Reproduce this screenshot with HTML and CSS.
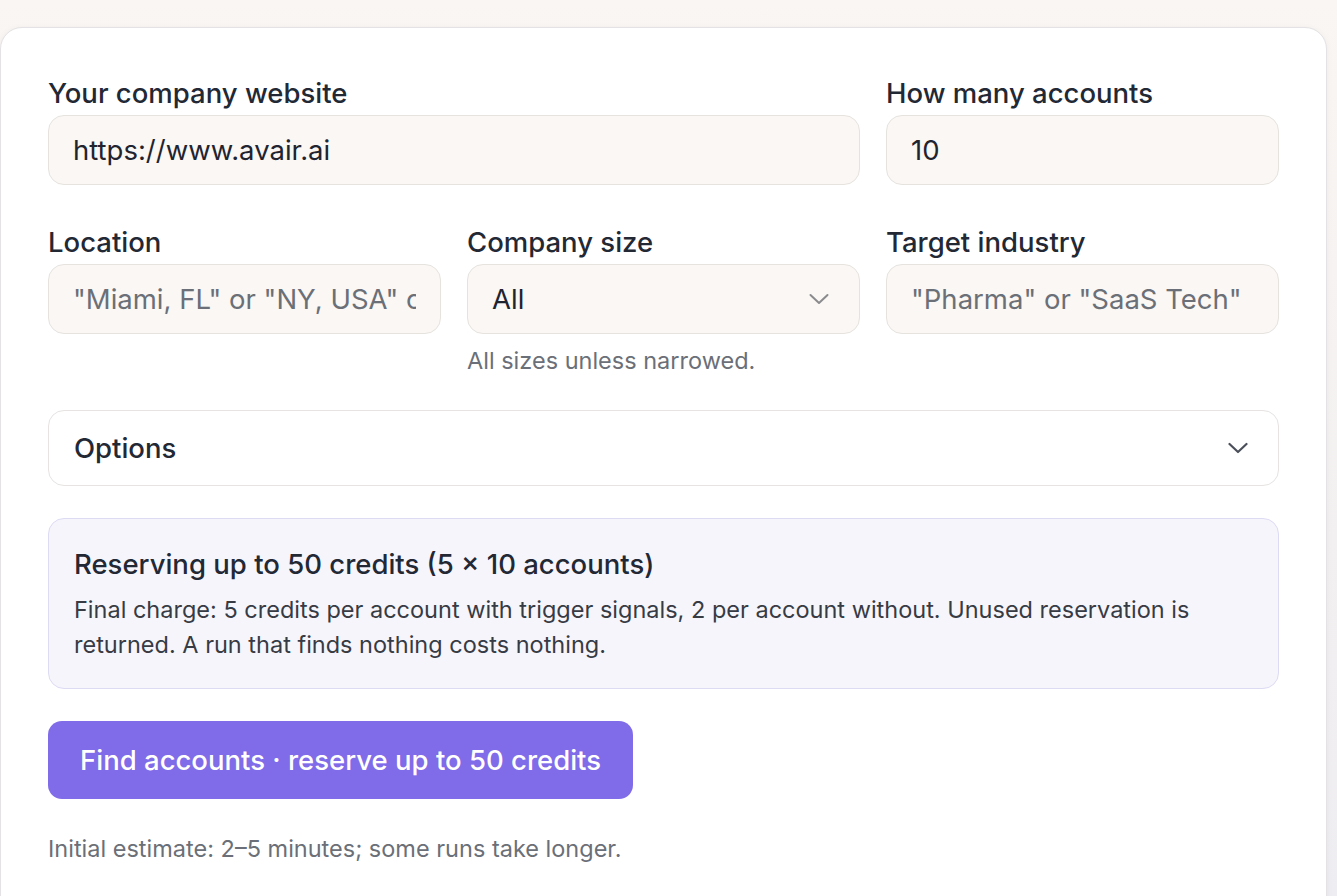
FILE: index.html
```html
<!DOCTYPE html>
<html lang="en">
<head>
<meta charset="utf-8">
<title>Find accounts</title>
<link rel="stylesheet" href="styles.css">
</head>
<body>
<div class="page">
  <div class="card">
    <div class="grid">
      <div class="field span2">
        <label class="label">Your company website</label>
        <input class="input" type="text" value="https://www.avair.ai">
      </div>
      <div class="field">
        <label class="label">How many accounts</label>
        <input class="input" type="text" value="10">
      </div>
      <div class="field">
        <label class="label">Location</label>
        <input class="input" type="text" placeholder="&quot;Miami, FL&quot; or &quot;NY, USA&quot; or &quot;Europe&quot;">
      </div>
      <div class="field">
        <label class="label">Company size</label>
        <div class="input select">
          <span>All</span>
          <svg class="chev chev-light" width="20" height="12" viewBox="0 0 20 12"><path d="M1.5 2 L10 10 L18.5 2" fill="none" stroke="currentColor" stroke-width="2" stroke-linecap="round" stroke-linejoin="round"/></svg>
        </div>
        <p class="helper">All sizes unless narrowed.</p>
      </div>
      <div class="field">
        <label class="label">Target industry</label>
        <input class="input" type="text" placeholder="&quot;Pharma&quot; or &quot;SaaS Tech&quot;">
      </div>
    </div>

    <div class="options">
      <span>Options</span>
      <svg class="chev chev-dark" width="20" height="12" viewBox="0 0 20 12"><path d="M1.5 2 L10 10 L18.5 2" fill="none" stroke="currentColor" stroke-width="2.2" stroke-linecap="round" stroke-linejoin="round"/></svg>
    </div>

    <div class="info">
      <h3 class="info-title">Reserving up to 50 credits (5 × 10 accounts)</h3>
      <p class="info-body">Final charge: 5 credits per account with trigger signals, 2 per account without. Unused reservation is returned. A run that finds nothing costs nothing.</p>
    </div>

    <button class="cta" type="button">Find accounts · reserve up to 50 credits</button>

    <p class="note">Initial estimate: 2–5 minutes; some runs take longer.</p>
  </div>
</div>
</body>
</html>
```

FILE: styles.css
```css
* { box-sizing: border-box; }
html, body {
  margin: 0;
  padding: 0;
  height: 100%;
  overflow: hidden;
}
body {
  font-family: "Inter", "Noto Sans", "Liberation Sans", sans-serif;
  background: linear-gradient(180deg, #faf6f3 0%, #f3f0f1 60%, #eeedf1 100%);
  color: #1f2430;
}
.page {
  padding-top: 27px;
  padding-right: 10px;
}
.card {
  background: #ffffff;
  border: 1px solid #e4e2e4;
  border-radius: 22px;
  padding: 47px 47px 60px 47px;
  box-shadow: 0 1px 6px rgba(40, 30, 60, 0.05);
}
.grid {
  display: grid;
  grid-template-columns: repeat(3, 1fr);
  column-gap: 26px;
  row-gap: 39px;
}
.span2 { grid-column: span 2; }
.field { display: flex; flex-direction: column; min-width: 0; }
.label {
  display: block;
  font-size: 27.5px;
  line-height: 36px;
  font-weight: 500;
  color: #232835;
  margin-bottom: 4px;
}
.input {
  width: 100%;
  height: 70px;
  border: 1.5px solid #e6e3df;
  background: #faf7f4;
  border-radius: 16px;
  padding: 0 24px;
  font-family: inherit;
  font-size: 27.5px;
  color: #1f2430;
  outline: none;
}
.input::placeholder { color: #6b6f77; opacity: 1; }
.select {
  display: flex;
  align-items: center;
  justify-content: space-between;
  padding-right: 30px;
}
.chev { display: block; flex: none; }
.chev-light { color: #8b8b8e; }
.chev-dark { color: #4a4f59; }
.helper {
  margin: 13px 0 0;
  font-size: 23.5px;
  line-height: 28px;
  color: #6b6f77;
}
.options {
  margin-top: 35px;
  height: 76px;
  border: 1.5px solid #e6e3e2;
  border-radius: 16px;
  background: #ffffff;
  display: flex;
  align-items: center;
  justify-content: space-between;
  padding: 0 30px 0 25px;
  font-size: 27.5px;
  font-weight: 500;
  color: #232835;
}
.info {
  margin-top: 32px;
  background: #f6f5fc;
  border: 1.5px solid #dddbf4;
  border-radius: 16px;
  padding: 27px 25px 26px 25px;
}
.info-title {
  margin: 0;
  font-size: 27.5px;
  line-height: 36px;
  font-weight: 500;
  color: #232835;
}
.info-body {
  margin: 10px 0 0;
  font-size: 23.5px;
  line-height: 35px;
  color: #373b44;
}
.cta {
  display: block;
  margin-top: 32px;
  height: 78px;
  padding: 0 32px;
  border: none;
  border-radius: 14px;
  background: #806be9;
  color: #ffffff;
  font-family: inherit;
  font-size: 27.5px;
  font-weight: 500;
}
.note {
  margin: 35px 0 0;
  font-size: 23.5px;
  line-height: 30px;
  color: #6b6f77;
}
```
